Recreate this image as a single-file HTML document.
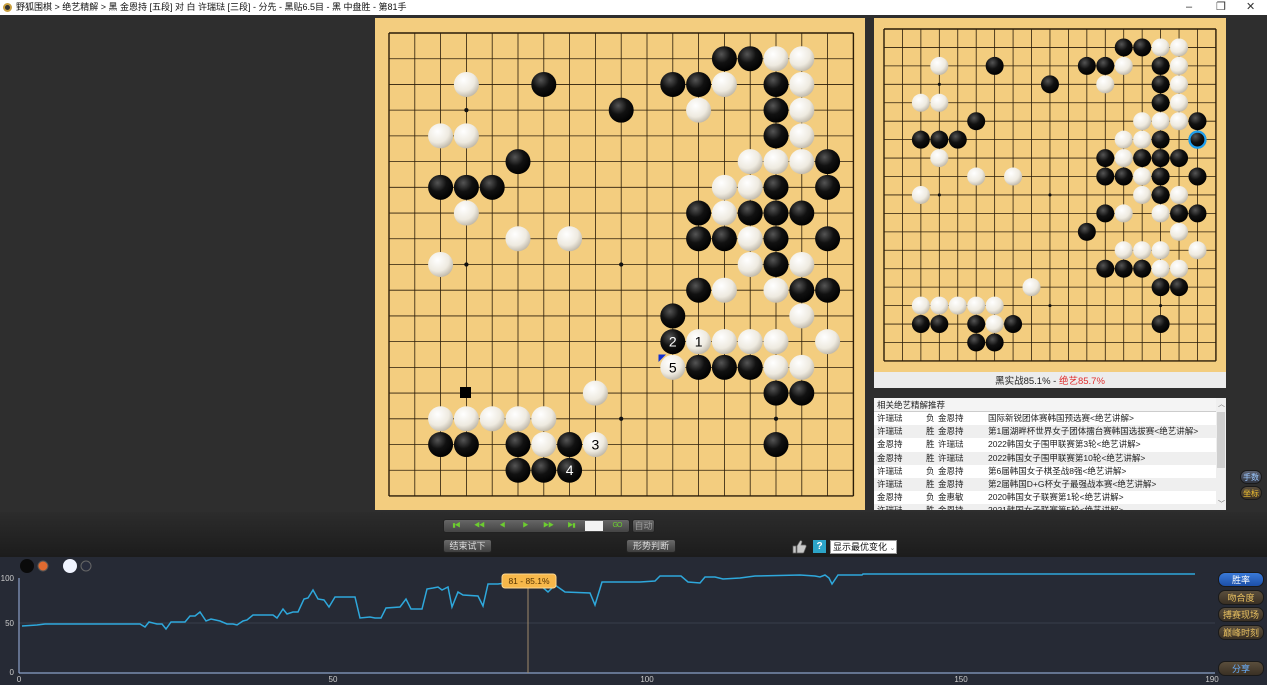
<!DOCTYPE html>
<html><head><meta charset="utf-8"><style>
*{margin:0;padding:0;box-sizing:border-box}
body{width:1267px;height:685px;overflow:hidden;background:#2e2e2e;font-family:"Liberation Sans","Noto Sans CJK SC",sans-serif;position:relative}
.abs{position:absolute}
#title{left:0;top:0;width:1267px;height:15px;background:#fff;font-size:9px;color:#111;line-height:15px;padding-left:16px}
#title .ico{position:absolute;left:3px;top:3px;width:9px;height:9px;border-radius:50%;background:#333;border:2px solid #c9a040}
.wc{position:absolute;top:0;font-size:11px;color:#333;line-height:14px}
.btn{position:absolute;height:14px;border-radius:3px;background:linear-gradient(#6a6a6a,#3e3e3e);border:1px solid #222;color:#ddd;font-size:9px;line-height:12px;text-align:center}
.pill{position:absolute;left:1218px;width:46px;height:15px;border-radius:7px;background:linear-gradient(#5a4e3c,#3a3024);color:#e8c060;font-size:9px;line-height:15px;text-align:center;border:1px solid #1a1a1a}
#list{left:874px;top:398px;width:352px;height:112px;background:#fff;font-size:8.5px;color:#222;overflow:hidden}
#list .row{position:absolute;left:0;width:342px;height:13.2px;line-height:13.2px}
#list .row span{position:absolute}
.nv{position:absolute;top:520px;font-size:6px;color:#6ccc30;line-height:12px;width:20px;text-align:center;letter-spacing:-1px}
</style></head><body>
<div id="title" class="abs"><div class="ico"></div>野狐围棋 &gt; 绝艺精解 &gt; 黑 金恩持 [五段] 对 白 许瑞琺 [三段] - 分先 - 黑贴6.5目 - 黑 中盘胜 - 第81手</div>
<div class="wc" style="left:1186px">–</div><div class="wc" style="left:1216px">❐</div><div class="wc" style="left:1246px">✕</div>

<svg class="abs" style="left:0;top:0" width="1267" height="685" id="svg">
<defs>
<radialGradient id="gb" cx="0.38" cy="0.32" r="0.7"><stop offset="0" stop-color="#555"/><stop offset="0.5" stop-color="#111"/><stop offset="1" stop-color="#000"/></radialGradient>
<radialGradient id="gw" cx="0.38" cy="0.32" r="0.75"><stop offset="0" stop-color="#fff"/><stop offset="0.6" stop-color="#eeeae0"/><stop offset="1" stop-color="#b8b0a0"/></radialGradient>
<linearGradient id="bot" x1="0" y1="0" x2="0" y2="1"><stop offset="0" stop-color="#2c2c2c"/><stop offset="1" stop-color="#1c1c1c"/></linearGradient>
</defs>
<rect x="0" y="512" width="1267" height="45" fill="url(#bot)"/>
<rect x="375" y="18" width="490" height="492" fill="#f3cd7f"/>
<rect x="874" y="18" width="352" height="354" fill="#f3cd7f"/>
<rect x="874" y="372" width="352" height="16" fill="#ececec"/>
<text x="1050" y="384" font-size="9.5" text-anchor="middle" fill="#222">黑实战85.1% - <tspan fill="#e03030">绝艺85.7%</tspan></text>
<rect x="0" y="557" width="1267" height="128" fill="#262a35"/>
<g id="g"></g>
</svg>

<div id="list" class="abs">
<div style="position:absolute;left:0;top:0;width:352px;height:14px;background:#f4f4f4;border-bottom:1px solid #ccc;line-height:14px;padding-left:3px">相关绝艺精解推荐</div>
<div style="position:absolute;left:342px;top:0;width:10px;height:112px;background:#efefef"></div>
<div style="position:absolute;left:343px;top:14px;width:8px;height:56px;background:#cfcfcf"></div>
<div style="position:absolute;left:344px;top:1px;font-size:7px;color:#666">︿</div>
<div style="position:absolute;left:344px;top:101px;font-size:7px;color:#666">﹀</div>
<div id="rows"></div>
</div>

<div class="btn" style="left:443px;top:519px;width:187px;background:linear-gradient(#666,#444)"></div>
<div class="nv" style="left:446px">▮◀</div><div class="nv" style="left:469px">◀◀</div><div class="nv" style="left:492px">◀</div><div class="nv" style="left:515px">▶</div><div class="nv" style="left:538px">▶▶</div><div class="nv" style="left:561px">▶▮</div><div class="nv" style="left:607px;font-size:7px">GO</div>
<div class="btn" style="left:632px;top:519px;width:23px;color:#999">自动</div>
<div class="abs" style="left:585px;top:521px;width:18px;height:10px;background:#f4f4f4"></div>
<div class="btn" style="left:443px;top:539px;width:49px">结束试下</div>
<div class="btn" style="left:626px;top:539px;width:50px">形势判断</div>
<svg class="abs" style="left:792px;top:539px" width="15" height="15"><path d="M1 7h3v7H1z M5 7l3-5c1-1 2 0 2 1l-1 3h4c1 0 1.5 1 1 2l-2 5c0 1-1 1-1.5 1H5z" fill="#c8c8c8" stroke="#666" stroke-width="0.7"/></svg>
<div class="abs" style="left:813px;top:540px;width:13px;height:13px;background:#2ca4c8;color:#fff;font-weight:bold;font-size:10px;text-align:center;line-height:13px">?</div>
<div class="abs" style="left:830px;top:540px;width:67px;height:14px;background:#fff;border:1px solid #999;font-size:9px;line-height:12px;padding-left:2px;color:#111">显示最优变化 <span style="color:#777;font-size:7px">⌄</span></div>

<div class="pill" style="top:572px;background:linear-gradient(#3a7ad8,#1c4fa8);color:#fff">胜率</div>
<div class="pill" style="top:590px">吻合度</div>
<div class="pill" style="top:607px">搏赛现场</div>
<div class="pill" style="top:625px">巅峰时刻</div>
<div class="pill" style="top:661px;color:#6ab0ff">分享</div>
<div class="pill" style="left:1240px;top:470px;width:22px;height:14px;line-height:14px;background:linear-gradient(#5a6070,#303540);color:#9cc8ff;font-size:8px">手数</div>
<div class="pill" style="left:1240px;top:486px;width:22px;height:14px;line-height:14px;color:#f0c030;font-size:8px">坐标</div>

<script>
var g=document.getElementById('g'),h='';
function board(x0,y0,sx,sy,r){
 var L=x0,T=y0,R=x0+18*sx,B=y0+18*sy;
 for(var i=0;i<19;i++){
  h+='<line x1="'+L+'" y1="'+(y0+i*sy)+'" x2="'+R+'" y2="'+(y0+i*sy)+'" stroke="#2a1c08" stroke-width="'+(i==0||i==18?1.4:0.8)+'"/>';
  h+='<line x1="'+(x0+i*sx)+'" y1="'+T+'" x2="'+(x0+i*sx)+'" y2="'+B+'" stroke="#2a1c08" stroke-width="'+(i==0||i==18?1.4:0.8)+'"/>';
 }
 [3,9,15].forEach(function(a){[3,9,15].forEach(function(b){h+='<circle cx="'+(x0+a*sx)+'" cy="'+(y0+b*sy)+'" r="'+(r*0.17)+'" fill="#111"/>';});});
}
function stones(x0,y0,sx,sy,r,rows){
 rows.forEach(function(s,ri){ if(!s)return; s.split(' ').forEach(function(t){
  var c=t[0],m=t.slice(1).split(':'),col=+m[0],num=m[1];
  var cx=x0+col*sx,cy=y0+(ri+1)*sy;
  h+='<circle cx="'+cx+'" cy="'+cy+'" r="'+r+'" fill="url(#g'+(c=='B'?'b':'w')+')"/>';
  if(num)h+='<text x="'+cx+'" y="'+(cy+5)+'" font-size="14" text-anchor="middle" fill="'+(c=='B'?'#fff':'#000')+'">'+num+'</text>';
 });});
}
var main=["B13 B14 W15 W16","W3 B6 B11 B12 W13 B15 W16","B9 W12 B15 W16","W2 W3 B15 W16","B5 W14 W15 W16 B17","B2 B3 B4 W13 W14 B15 B17","W3 B12 W13 B14 B15 B16","W5 W7 B12 B13 W14 B15 B17","W2 W14 B15 W16","B12 W13 W15 B16 B17","B11 W16","B11:2 W12:1 W13 W14 W15 W17","W11:5 B12 B13 B14 W15 W16","W8 B15 B16","W2 W3 W4 W5 W6","B2 B3 B5 W6 B7 W8:3 B15","B5 B6 B7:4"];
var side=["B13 B14 W15 W16","W3 B6 B11 B12 W13 B15 W16","B9 W12 B15 W16","W2 W3 B15 W16","B5 W14 W15 W16 B17","B2 B3 B4 W13 W14 B15 B17","W3 B12 W13 B14 B15 B16","W5 W7 B12 B13 W14 B15 B17","W2 W14 B15 W16","B12 W13 W15 B16 B17","B11 W16","W13 W14 W15 W17","B12 B13 B14 W15 W16","W8 B15 B16","W2 W3 W4 W5 W6","B2 B3 B5 W6 B7 B15","B5 B6"];
board(389,33,25.8,25.72,12.5);
stones(389,33,25.8,25.72,12.5,main);
h+='<rect x="460" y="387" width="11" height="11" fill="#000"/>';
h+='<polygon points="658.5,354.5 666,354.5 658.5,362" fill="#1030d0"/>';
board(884,29,18.44,18.44,9);
stones(884,29,18.44,18.44,9,side);
h+='<circle cx="'+(884+17*18.44)+'" cy="'+(29+6*18.44)+'" r="8" fill="none" stroke="#1fa0f0" stroke-width="2.2"/>';
h+='<line x1="19" y1="623" x2="1215" y2="623" stroke="#383d4a" stroke-width="1"/>';
h+='<line x1="19" y1="578" x2="19" y2="673" stroke="#8aa0c8" stroke-width="1.2"/>';
h+='<line x1="19" y1="673" x2="1215" y2="673" stroke="#8aa0c8" stroke-width="1.2"/>';
[["100",578],["50",623],["0",672]].forEach(function(a){h+='<text x="14" y="'+(a[1]+3)+'" font-size="8" fill="#ccc" text-anchor="end">'+a[0]+'</text>';});
[[0,19],[50,333],[100,647],[150,961],[190,1212]].forEach(function(a){h+='<text x="'+a[1]+'" y="682" font-size="8" fill="#ccc" text-anchor="middle">'+a[0]+'</text>';});
var p="22,626 37,625 45,624 77,624 140,624 145,627 149,622 157,624 162,624 166,629 171,622 185,622 190,616 195,616 200,612 206,621 211,619 220,621 227,624 233,624 237,625 243,621 247,620 253,615 273,615 277,618 283,609 287,614 293,612 298,612 304,599 308,598 313,590 318,599 324,600 329,607 335,597 355,597 360,618 370,617 375,618 381,618 386,608 400,607 406,599 411,609 422,609 427,589 433,588 438,587 442,590 448,587 452,607 458,592 463,595 478,596 483,606 488,584 498,584 513,582 523,581 540,585 548,592 555,585 565,592 590,593 595,605 602,582 640,582 655,581 660,576 681,576 688,582 700,583 705,577 715,577 723,579 740,578 755,576 800,575 815,576 820,577 825,575 829,578 832,584 838,575 862,575 863,574 1195,574";
h+='<polyline points="'+p+'" fill="none" stroke="#2ea8dc" stroke-width="1.5"/>';
h+='<line x1="528" y1="588" x2="528" y2="673" stroke="#a08a6a" stroke-width="1"/>';
h+='<rect x="502" y="574" width="54" height="14" rx="3" fill="#f7b84a" stroke="#ffd890"/><text x="529" y="584" font-size="8.5" fill="#553300" text-anchor="middle">81 - 85.1%</text>';
h+='<circle cx="27" cy="566" r="7" fill="#0a0a0a"/><circle cx="43" cy="566" r="5" fill="#e06a30" stroke="#555"/>';
h+='<circle cx="70" cy="566" r="7" fill="#f0f4ff"/><circle cx="86" cy="566" r="5" fill="#282c3c" stroke="#666"/>';
g.innerHTML=h;
var rows=[["许瑞琺","负","金恩持","国际新锐团体赛韩国预选赛<绝艺讲解>"],["许瑞琺","胜","金恩持","第1届湖畔杯世界女子团体擂台赛韩国选拔赛<绝艺讲解>"],["金恩持","胜","许瑞琺","2022韩国女子围甲联赛第3轮<绝艺讲解>"],["金恩持","胜","许瑞琺","2022韩国女子围甲联赛第10轮<绝艺讲解>"],["许瑞琺","负","金恩持","第6届韩国女子棋圣战8强<绝艺讲解>"],["许瑞琺","胜","金恩持","第2届韩国D+G杯女子最强战本赛<绝艺讲解>"],["金恩持","负","金惠敏","2020韩国女子联赛第1轮<绝艺讲解>"],["许瑞琺","胜","金恩持","2021韩国女子联赛第5轮<绝艺讲解>"]];
var rh='';rows.forEach(function(r,i){rh+='<div class="row" style="top:'+(14+i*13.2)+'px;background:'+(i%2?'#efefef':'#fff')+'"><span style="left:3px">'+r[0]+'</span><span style="left:52px">'+r[1]+'</span><span style="left:64px">'+r[2]+'</span><span style="left:114px">'+r[3].replace(/</g,'&lt;').replace(/>/g,'&gt;')+'</span></div>';});
document.getElementById('rows').innerHTML=rh;
</script>
</body></html>
